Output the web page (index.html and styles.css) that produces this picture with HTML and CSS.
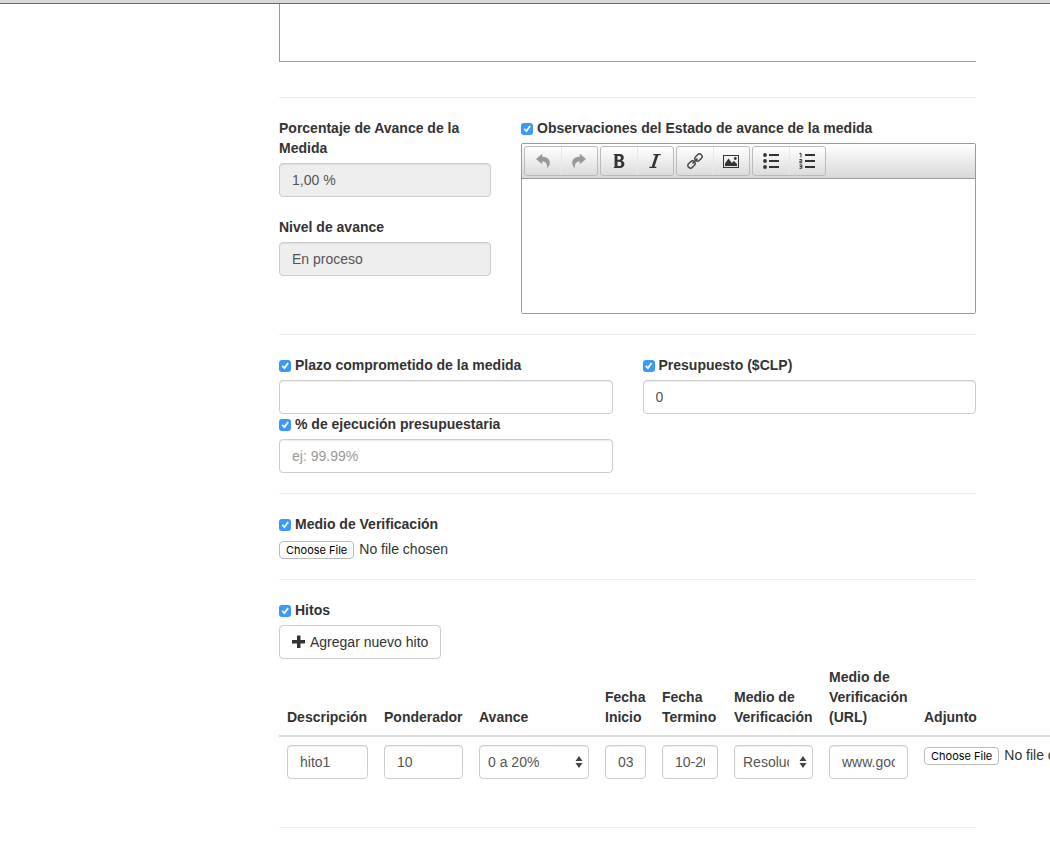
FILE: index.html
```html
<!DOCTYPE html>
<html lang="es">
<head>
<meta charset="utf-8">
<title>Estado de avance de la medida</title>
<link rel="stylesheet" href="styles.css">
</head>
<body>
<div class="topbar"></div>
<main class="page">
  <textarea class="editor-tail" aria-label="Descripción de la medida"></textarea>
  <hr>
  <div class="row row-progress">
    <div class="stack">
      <div>
        <label class="label" for="porcentaje">Porcentaje de Avance de la Medida</label>
        <input class="control" id="porcentaje" type="text" value="1,00 %" readonly>
      </div>
      <div>
        <label class="label" for="nivel">Nivel de avance</label>
        <input class="control" id="nivel" type="text" value="En proceso" readonly>
      </div>
    </div>
    <div>
      <label class="label check"><input type="checkbox" checked>Observaciones del Estado de avance de la medida</label>
      <div class="editor">
        <div class="toolbar">
          <div class="group">
            <button class="tool off" type="button" aria-label="Deshacer"><svg viewBox="0 0 16 16"><path fill="#999" d="M1 6 7.200 .8V3.800C12 3.800 14.800 6.300 14.800 10 14.800 12 13.800 13.800 12 15.200 12.500 10.800 11 8.500 7.200 8.500V11.200Z"/></svg></button>
            <button class="tool off" type="button" aria-label="Rehacer"><svg viewBox="0 0 16 16"><path fill="#999" d="M15 6 8.800 .8V3.800C4 3.800 1.200 6.300 1.200 10 1.200 12 2.200 13.800 4 15.200 3.500 10.800 5 8.500 8.800 8.500V11.200Z"/></svg></button>
          </div>
          <div class="group">
            <button class="tool" type="button" aria-label="Negrita"><svg viewBox="0 0 16 16"><path fill="#333" fill-rule="evenodd" d="M2.800 1H8.500C11.500 1 12.800 2.500 12.800 4.600 12.800 6.200 12 7.200 10.700 7.700 12.500 8.200 13.400 9.300 13.400 11.100 13.400 13.500 11.800 15 9 15H2.800V13.900H3.600V2.100H2.800ZM6.500 3V6.700H8C9.300 6.700 9.900 6.100 9.900 4.900S9.300 3 8 3ZM6.500 8.700V13H8.200C9.700 13 10.400 12.200 10.400 10.900S9.700 8.700 8.200 8.700Z"/></svg></button>
            <button class="tool" type="button" aria-label="Cursiva"><svg viewBox="0 0 16 16"><path fill="#333" d="M6.500 1H13.800L13.500 2.200H11.300L7.500 13.800H9.500L9.200 15H2.200L2.500 13.800H4.700L8.500 2.200H6.200Z"/></svg></button>
          </div>
          <div class="group">
            <button class="tool" type="button" aria-label="Insertar vínculo"><svg viewBox="0 0 16 16"><g fill="none" stroke="#444" stroke-width="1.400" transform="rotate(-45 8 8)"><rect x="-.9" y="5.400" width="8" height="5.200" rx="2.600"/><rect x="8.900" y="5.400" width="8" height="5.200" rx="2.600"/><path stroke-width="1.600" d="M4.500 8H11.500"/></g></svg></button>
            <button class="tool" type="button" aria-label="Imagen"><svg viewBox="0 0 16 16"><path fill="#333" fill-rule="evenodd" d="M0 2H16V15H0ZM1 3V14H15V3Z"/><path fill="#333" d="M2 13V10.500L5.500 5.500 8.800 10 11 8 14 11V13Z"/><circle cx="12.300" cy="5.500" r="1.400" fill="#333"/></svg></button>
          </div>
          <div class="group">
            <button class="tool" type="button" aria-label="Viñetas"><svg viewBox="0 0 16 16"><g fill="#333"><circle cx="2" cy="2" r="1.900"/><circle cx="2" cy="8" r="1.900"/><circle cx="2" cy="14" r="1.900"/><path d="M6 1H16V3H6ZM6 7H16V9H6ZM6 13H16V15H6Z"/></g></svg></button>
            <button class="tool" type="button" aria-label="Numeración"><svg viewBox="0 0 16 16"><path fill="#333" d="M6 1H16V3H6ZM6 7H16V9H6ZM6 13H16V15H6Z"/><path fill="none" stroke="#333" d="M.5 .5H2V4.500M.5 6.500H2.800V8.200H.8V9.700H3.300M.5 11.800H2.800V15.300H.5M.8 13.500H2.800"/></svg></button>
          </div>
        </div>
        <textarea class="editor-body" aria-label="Observaciones del Estado de avance de la medida"></textarea>
      </div>
    </div>
  </div>
  <hr>
  <div class="row row-half">
    <div>
      <div class="label check"><input type="checkbox" id="c-plazo" aria-label="Plazo" checked><label for="plazo">Plazo comprometido de la medida</label></div>
      <input class="control" id="plazo" type="text">
      <div class="label check"><input type="checkbox" id="c-ejec" aria-label="Ejecución" checked><label for="ejecucion">% de ejecución presupuestaria</label></div>
      <input class="control" id="ejecucion" type="text" placeholder="ej: 99.99%">
    </div>
    <div>
      <div class="label check"><input type="checkbox" id="c-pres" aria-label="Presupuesto" checked><label for="presupuesto">Presupuesto ($CLP)</label></div>
      <input class="control" id="presupuesto" type="text" value="0">
    </div>
  </div>
  <hr>
  <div class="label check"><input type="checkbox" id="c-medio" aria-label="Medio" checked><label for="medio">Medio de Verificación</label></div>
  <input class="file" id="medio" type="file">
  <hr>
  <label class="label check"><input type="checkbox" checked>Hitos</label>
  <button class="btn" type="button"><svg viewBox="0 0 14 14"><path fill="#333" d="M5 .5H8.500V5H13V8.500H8.500V13H5V8.500H0V5H5Z"/></svg>Agregar nuevo hito</button>
  <table class="hitos">
    <thead>
      <tr>
        <th class="w-desc">Descripción</th>
        <th class="w-mid">Ponderador</th>
        <th class="w-avance">Avance</th>
        <th class="w-inicio">Fecha Inicio</th>
        <th class="w-termino">Fecha Termino</th>
        <th class="w-mid">Medio de Verificación</th>
        <th class="w-mid">Medio de Verificación (URL)</th>
        <th>Adjunto</th>
      </tr>
    </thead>
    <tbody>
      <tr>
        <td><input class="control" type="text" value="hito1" aria-label="Descripción"></td>
        <td><input class="control" type="text" value="10" aria-label="Ponderador"></td>
        <td><div class="picker"><select class="control" aria-label="Avance"><option>0 a 20%</option></select><svg viewBox="0 0 8 12"><path fill="#444" d="M4 0 7.500 5H.5ZM4 12 .5 7H7.500Z"/></svg></div></td>
        <td><input class="control" type="text" value="03-10-2016" aria-label="Fecha Inicio"></td>
        <td><input class="control" type="text" value="10-2016" aria-label="Fecha Termino"></td>
        <td><div class="picker"><select class="control" aria-label="Medio de Verificación"><option>Resolución</option></select><svg viewBox="0 0 8 12"><path fill="#444" d="M4 0 7.500 5H.5ZM4 12 .5 7H7.500Z"/></svg></div></td>
        <td><input class="control" type="text" value="www.google.cl" aria-label="Medio de Verificación (URL)"></td>
        <td><input class="file" type="file" aria-label="Adjunto"></td>
      </tr>
    </tbody>
  </table>
  <hr>
</main>
</body>
</html>
```
FILE: styles.css
```css
* { box-sizing: border-box; }

body {
  margin: 0;
  background: #fff;
  color: #333;
  font: 14px/20px "Liberation Sans", Arial, sans-serif;
}

input, select, button, textarea { font: inherit; color: inherit; margin: 0; }

.topbar { height: 4px; background: #d8d8d8; border-bottom: 1px solid #6b6b6b; }

.page { padding: 0 74px 0 279px; overflow-x: clip; }

hr { margin: 20px 0; border: 0; border-top: 1px solid #eee; }

.editor-tail {
  display: block;
  width: 100%;
  height: 58px;
  margin-bottom: 35px;
  border: 1px solid #999;
  border-width: 0 0 1px 1px;
  resize: none;
}

.row { display: grid; column-gap: 30px; }
.row-progress { grid-template-columns: 212px 1fr; }
.row-half { grid-template-columns: 1fr 1fr; }
.stack { display: flex; flex-direction: column; gap: 20px; }

.label { display: block; margin-bottom: 5px; font-weight: bold; }
.check { display: flex; align-items: center; gap: 4px; }

input[type="checkbox"] {
  appearance: none;
  flex: none;
  width: 12px;
  height: 12px;
  margin-top: 2px;
  border-radius: 3px;
  background: #3b99fc;
}
input[type="checkbox"]:checked::after {
  content: "";
  display: block;
  height: 12px;
  background: #fff;
  clip-path: polygon(22% 54%, 32% 44%, 44% 57%, 70% 21%, 82% 29%, 46% 80%);
}

.control {
  display: block;
  width: 100%;
  height: 34px;
  padding: 6px 12px;
  border: 1px solid #ccc;
  border-radius: 4px;
  background: #fff;
  box-shadow: inset 0 1px 1px rgba(0, 0, 0, .075);
  color: #555;
}
.control[readonly] { background: #eee; }
.control::placeholder { color: #999; opacity: 1; }

.editor { border: 1px solid #999; border-radius: 2px; }
.toolbar {
  display: flex;
  gap: 2px;
  padding: 2px;
  border-bottom: 1px solid #999;
  background: linear-gradient(#fff, #d8d8d8);
}
.group {
  display: flex;
  width: 74px;
  height: 30px;
  border: 1px solid #bbb;
  border-radius: 3px;
  background: linear-gradient(#fff, #dcdcdc);
}
.tool {
  display: grid;
  place-items: center;
  flex: 1;
  padding: 0;
  border: 0;
  background: none;
}
.tool + .tool { border-left: 1px solid #e8e8e8; }
.tool svg { width: 16px; height: 16px; }
.editor-body { display: block; width: 100%; height: 134px; border: 0; resize: none; }

.file { display: block; width: 100%; height: 20px; color: #333; line-height: 16px; }
.file::file-selector-button {
  height: 18px;
  margin: 2px 5px 0 0;
  padding: 0 6px;
  border: 1px solid #bbb;
  border-radius: 4px;
  background: #fff;
  color: #000;
  font: 11px/16px Inter, sans-serif;
}

.btn {
  display: flex;
  align-items: center;
  gap: 4px;
  height: 34px;
  padding: 6px 12px;
  border: 1px solid #ccc;
  border-radius: 4px;
  background: #fff;
}
.btn svg { width: 14px; height: 14px; }

.hitos {
  width: 130%;
  margin-bottom: 40px;
  table-layout: fixed;
  border-collapse: separate;
  border-spacing: 0;
}
.hitos th {
  padding: 8px;
  border-bottom: 2px solid #ddd;
  text-align: left;
  vertical-align: bottom;
}
.hitos td { padding: 8px; vertical-align: top; }
.w-desc { width: 97px; }
.w-mid { width: 95px; }
.w-avance { width: 126px; }
.w-inicio { width: 57px; }
.w-termino { width: 72px; }

.picker { position: relative; }
.picker select { appearance: none; padding: 6px 23px 6px 8px; }
.picker svg { position: absolute; top: 11px; right: 6px; width: 8px; height: 12px; pointer-events: none; }
```
